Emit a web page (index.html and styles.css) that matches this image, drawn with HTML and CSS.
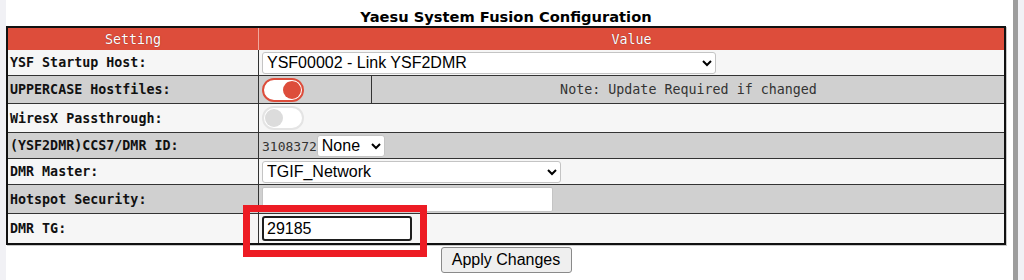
FILE: index.html
```html
<!DOCTYPE html>
<html lang="en">
<head>
  <meta charset="UTF-8">
  <meta name="viewport" content="width=device-width, initial-scale=1.0">
  <title>Yaesu System Fusion Configuration</title>
  <link rel="stylesheet" href="styles.css">
</head>
<body>
  <div class="page">
    <h2 class="title">Yaesu System Fusion Configuration</h2>

    <div class="table-wrap">
      <table class="settings">
        <colgroup>
          <col class="col-label">
          <col class="col-switch">
          <col>
        </colgroup>
        <tr class="head">
          <th>Setting</th>
          <th colspan="2" class="val">Value</th>
        </tr>
        <tr class="light r-select">
          <td class="label">YSF Startup Host:</td>
          <td colspan="2" class="val">
            <select class="select w-host">
              <option>YSF00002 - Link YSF2DMR</option>
            </select>
          </td>
        </tr>
        <tr class="dark r-switch">
          <td class="label">UPPERCASE Hostfiles:</td>
          <td class="val"><span class="switch on"></span></td>
          <td class="val note">Note: Update Required if changed</td>
        </tr>
        <tr class="light r-switch2">
          <td class="label">WiresX Passthrough:</td>
          <td colspan="2" class="val"><span class="switch"></span></td>
        </tr>
        <tr class="dark r-select">
          <td class="label">(YSF2DMR)CCS7/DMR ID:</td>
          <td colspan="2" class="val"><span class="dmr-id">3108372</span><select class="select w-none"><option>None</option></select></td>
        </tr>
        <tr class="light r-select">
          <td class="label">DMR Master:</td>
          <td colspan="2" class="val">
            <select class="select w-master">
              <option>TGIF_Network</option>
            </select>
          </td>
        </tr>
        <tr class="dark r-input">
          <td class="label">Hotspot Security:</td>
          <td colspan="2" class="val"><input type="password" class="field w-sec" value=""></td>
        </tr>
        <tr class="light r-input">
          <td class="label">DMR TG:</td>
          <td colspan="2" class="val"><input type="text" class="field w-tg focused" value="29185"></td>
        </tr>
      </table>
      <span class="callout"></span>
    </div>

    <div class="actions">
      <button type="button" class="apply">Apply Changes</button>
    </div>
  </div>
</body>
</html>
```

FILE: styles.css
```css
*{
  box-sizing: border-box;
}
body{
  margin: 0;
  background: #f1f1f5;
  font-family: "DejaVu Sans", Verdana, sans-serif;
}
.page{
  margin-left: 6px;
  width: 1012px;
  height: 280px;
  background: #fff;
  border-right: 5px solid #9d9d9d;
}
.title{
  margin: 0;
  padding-top: 8px;
  width: 1000px;
  text-align: center;
  font-size: 14.67px;
  line-height: 18px;
  font-weight: bold;
  color: #000;
}

.table-wrap{
  position: relative;
  width: 1000px;
}
.settings{
  width: 1000px;
  table-layout: fixed;
  border: 2px solid #111;
  border-spacing: 0;
  box-shadow: 1px 1px 0 #c8c8c8;
  font-family: "DejaVu Sans Mono", monospace;
  font-size: 13.33px;
  color: #111;
}
.col-label{ width: 250px; }
.col-switch{ width: 113px; }

.settings th{
  height: 22px;
  padding: 0;
  background: #dd4d3b;
  color: #fff;
  font-weight: normal;
  text-shadow: 0 0 1px rgba(80, 0, 0, .7);
}
.settings th.val{
  border-left: 1px solid #f0a89e;
}
.settings td{
  padding: 0 2px;
  border-bottom: 1px solid #333;
  vertical-align: middle;
  white-space: nowrap;
}
.settings tr:last-child td{
  border-bottom: 0;
}
.settings td.val{
  padding-left: 3px;
  border-left: 1px solid #333;
}
.label{
  font-weight: bold;
  color: #111;
}
.light td{ background: #f6f6f6; }
.dark td{ background: #d0d0d0; }

.r-select{ height: 26px; }
.r-switch{ height: 28px; }
.r-switch2{ height: 29px; }
.r-input{ height: 29px; }

.note{
  text-align: center;
  color: #333;
}
.dmr-id{
  font-size: 13px;
  color: #333;
  vertical-align: middle;
}

.select{
  font-family: "Liberation Sans", Arial, sans-serif;
  font-size: 16px;
  height: 22px;
  padding: 0;
  border: 1px solid #c4c4c4;
  border-radius: 3px;
  background: #fff;
  color: #000;
  vertical-align: middle;
}
.w-host{ width: 454px; }
.w-none{ width: 68px; }
.w-master{ width: 299px; }

.field{
  font-family: "Liberation Sans", Arial, sans-serif;
  font-size: 16px;
  height: 25px;
  padding: 0 3px;
  border: 1px solid #c4c4c4;
  border-radius: 2px;
  background: #fff;
  color: #000;
  vertical-align: middle;
}
.w-sec{ width: 291px; }
.w-tg{ width: 150px; }
.focused{
  border: 2px solid #1e1e1e;
  border-radius: 3px;
  outline: none;
}

.switch{
  display: inline-block;
  position: relative;
  width: 42px;
  height: 24px;
  border: 2px solid #e4e4e4;
  border-radius: 12px;
  background: #fff;
  vertical-align: middle;
}
.switch::after{
  content: "";
  position: absolute;
  top: 1px;
  left: 1px;
  width: 18px;
  height: 18px;
  border-radius: 50%;
  background: #dcdcdc;
}
.switch.on{
  border-color: #dd4d3b;
}
.switch.on::after{
  left: auto;
  right: 1px;
  background: #dd4d3b;
}

.callout{
  position: absolute;
  left: 237px;
  top: 179px;
  width: 184px;
  height: 52px;
  border: 7px solid #ed1c24;
}

.actions{
  width: 1000px;
  padding-top: 2px;
  text-align: center;
}
.apply{
  font-family: "Liberation Sans", Arial, sans-serif;
  font-size: 16px;
  width: 131px;
  height: 26px;
  padding: 0;
  background: #efefef;
  border: 1px solid #8a8a8a;
  border-radius: 3px;
  color: #000;
}
```
